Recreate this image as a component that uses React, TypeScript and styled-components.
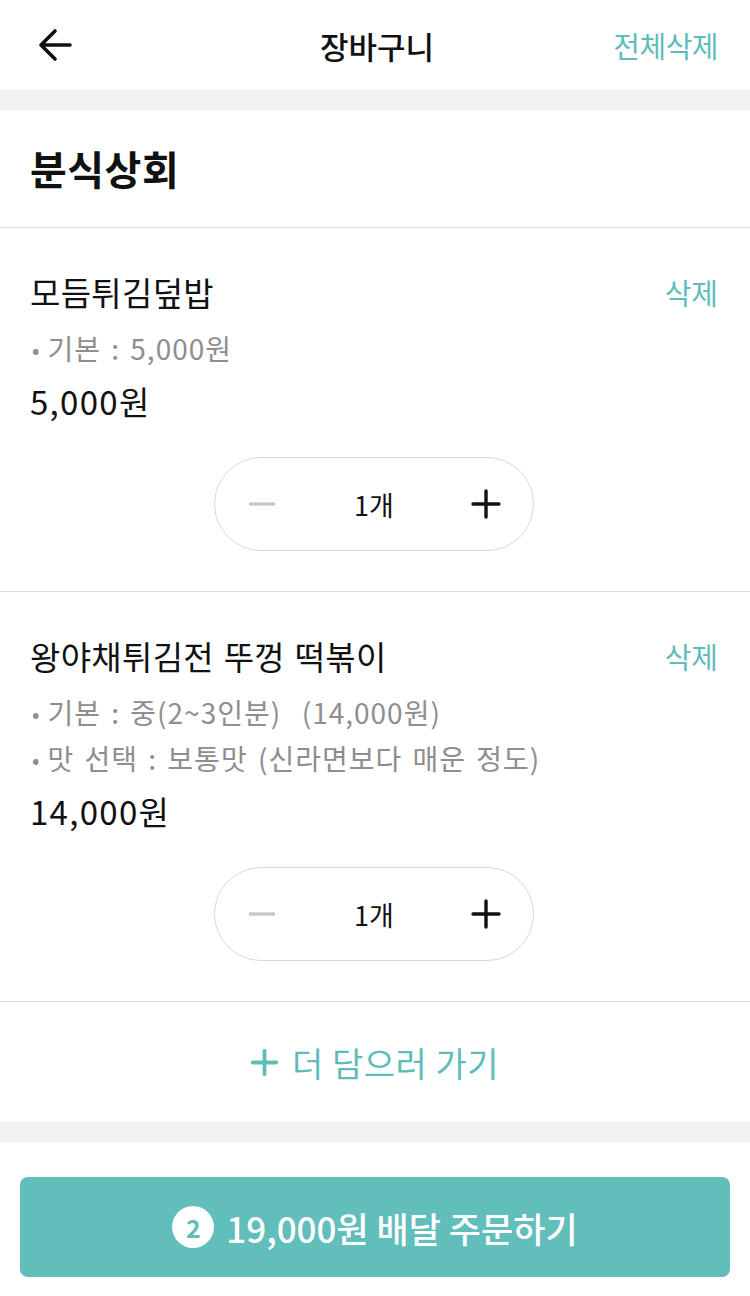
import React from "react";
import styled, { createGlobalStyle } from "styled-components";

const GlobalStyle = createGlobalStyle`
  html, body { margin: 0; padding: 0; background: #ffffff; }
  body { font-family: "Noto Sans CJK KR", "Noto Sans", sans-serif; color: #111; }
  * { box-sizing: border-box; }
`;

const TEAL = "#5fbdb9";

const Page = styled.div`
  width: 750px;
  min-height: 1296px;
  display: flex;
  flex-direction: column;
  background: #fff;
`;

const Header = styled.header`
  height: 90px;
  display: grid;
  grid-template-columns: 1fr auto 1fr;
  align-items: center;
  padding: 0 32px 0 36px;
`;

const BackButton = styled.button`
  justify-self: start;
  background: none;
  border: none;
  padding: 0;
  width: 38px;
  height: 38px;
  display: flex;
  align-items: center;
  justify-content: center;
  cursor: pointer;
`;

const Title = styled.h1`
  margin: 0;
  font-size: 31px;
  font-weight: 500;
  letter-spacing: 0;
  color: #111;
`;

const HeaderAction = styled.button`
  justify-self: end;
  background: none;
  border: none;
  padding: 0;
  font-family: inherit;
  font-size: 29px;
  font-weight: 400;
  letter-spacing: -0.5px;
  color: ${TEAL};
`;

const Band = styled.div`
  height: 20px;
  background: #f2f2f2;
`;

const StoreRow = styled.div`
  height: 118px;
  display: flex;
  align-items: center;
  padding: 0 30px;
  border-bottom: 1px solid #dcdcdc;
`;

const StoreName = styled.h2`
  margin: 0;
  font-size: 40px;
  font-weight: 700;
  letter-spacing: 0.5px;
  padding-bottom: 2px;
`;

const Item = styled.section`
  padding: 40px 32px 40px 30px;
  border-bottom: 1px solid #dcdcdc;
  display: flex;
  flex-direction: column;
`;

const ItemTop = styled.div`
  display: flex;
  justify-content: space-between;
  align-items: center;
`;

const ItemName = styled.div`
  font-size: 33px;
  line-height: 48px;
  letter-spacing: 0.3px;
  word-spacing: 2px;
  color: #111;
`;

const DeleteLink = styled.button`
  background: none;
  border: none;
  padding: 0;
  font-family: inherit;
  font-size: 29px;
  letter-spacing: 0;
  color: ${TEAL};
`;

const Options = styled.ul`
  list-style: none;
  margin: 9px 0 0;
  padding: 0;
`;

const Option = styled.li`
  display: flex;
  align-items: center;
  font-size: 28px;
  line-height: 46px;
  letter-spacing: 1px;
  word-spacing: 3px;
  color: #8e8e8e;
  white-space: pre;
`;

const Bullet = styled.span`
  font-size: 22px;
  margin: 0 7px 0 2px;
`;

const Price = styled.div`
  margin-top: 6px;
  font-size: 33px;
  line-height: 48px;
  letter-spacing: 1.3px;
  color: #111;
`;

const Stepper = styled.div`
  margin: 32px auto 0;
  width: 320px;
  height: 94px;
  border: 1px solid #d9d9d9;
  border-radius: 47px;
  display: grid;
  grid-template-columns: 94px 1fr 94px;
  align-items: center;
`;

const StepButton = styled.button`
  background: none;
  border: none;
  padding: 0;
  height: 100%;
  display: flex;
  align-items: center;
  justify-content: center;
`;

const Count = styled.span`
  text-align: center;
  font-size: 27px;
  letter-spacing: 0;
  color: #111;
`;

const MoreRow = styled.div`
  height: 120px;
  display: flex;
  align-items: center;
  justify-content: center;
  gap: 14px;
  color: ${TEAL};
  font-size: 34px;
  letter-spacing: 0.5px;
`;

const Footer = styled.div`
  padding: 35px 20px 20px;
`;

const OrderButton = styled.button`
  width: 100%;
  height: 100px;
  border: none;
  border-radius: 8px;
  background: #62bebb;
  color: #fff;
  font-family: inherit;
  font-size: 35px;
  font-weight: 500;
  letter-spacing: 0;
  display: flex;
  align-items: center;
  justify-content: center;
  gap: 12px;
`;

const Badge = styled.span`
  width: 42px;
  height: 42px;
  border-radius: 50%;
  background: #fff;
  color: #62bebb;
  font-size: 25px;
  font-weight: 700;
  display: flex;
  align-items: center;
  justify-content: center;
`;

const BackIcon = () => (
  <svg width="34" height="34" viewBox="0 0 34 34" fill="none">
    <path d="M32 17H3M17 3L3 17L17 31" stroke="#111" strokeWidth="3.6" strokeLinecap="round" strokeLinejoin="round" />
  </svg>
);

const MinusIcon = () => (
  <svg width="30" height="30" viewBox="0 0 30 30">
    <path d="M2 15H28" stroke="#c8c8c8" strokeWidth="3.4" />
  </svg>
);

const PlusIcon = ({ color = "#111", size = 30, weight = 3.4 }: { color?: string; size?: number; weight?: number }) => (
  <svg width={size} height={size} viewBox="0 0 30 30">
    <path d="M2 15H28M15 2V28" stroke={color} strokeWidth={weight} strokeLinecap="round" />
  </svg>
);

type CartItem = { name: string; options: string[]; price: string; qty: number };

const items: CartItem[] = [
  { name: "모듬튀김덮밥", options: ["기본 : 5,000원"], price: "5,000원", qty: 1 },
  {
    name: "왕야채튀김전 뚜껑 떡볶이",
    options: ["기본 : 중(2~3인분)  (14,000원)", "맛 선택 : 보통맛 (신라면보다 매운 정도)"],
    price: "14,000원",
    qty: 1,
  },
];

export default function App() {
  return (
    <Page>
      <GlobalStyle />
      <Header>
        <BackButton aria-label="뒤로">
          <BackIcon />
        </BackButton>
        <Title>장바구니</Title>
        <HeaderAction>전체삭제</HeaderAction>
      </Header>
      <Band />
      <StoreRow>
        <StoreName>분식상회</StoreName>
      </StoreRow>
      {items.map((it) => (
        <Item key={it.name}>
          <ItemTop>
            <ItemName>{it.name}</ItemName>
            <DeleteLink>삭제</DeleteLink>
          </ItemTop>
          <Options>
            {it.options.map((o) => (
              <Option key={o}>
                <Bullet>•</Bullet>
                {o}
              </Option>
            ))}
          </Options>
          <Price>{it.price}</Price>
          <Stepper>
            <StepButton aria-label="빼기">
              <MinusIcon />
            </StepButton>
            <Count>{it.qty}개</Count>
            <StepButton aria-label="더하기">
              <PlusIcon />
            </StepButton>
          </Stepper>
        </Item>
      ))}
      <MoreRow>
        <PlusIcon color={TEAL} size={27} weight={4.2} />
        <span>더 담으러 가기</span>
      </MoreRow>
      <Band />
      <Footer>
        <OrderButton>
          <Badge>2</Badge>
          <span>19,000원 배달 주문하기</span>
        </OrderButton>
      </Footer>
    </Page>
  );
}
